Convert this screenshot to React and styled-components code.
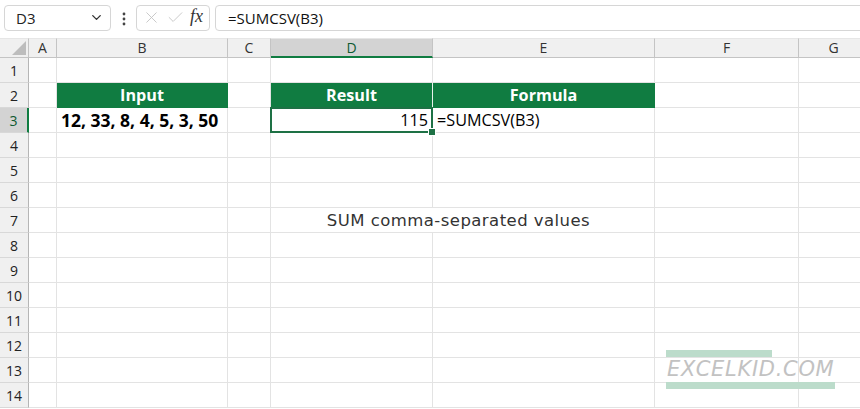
import styled, { createGlobalStyle } from "styled-components"
import { ChevronDown, X, Check } from "lucide-react"

const GREEN = "#107c41"
const GRID = "#e3e3e3"
const HEAD_LINE = "#c4c4c4"

const GlobalStyle = createGlobalStyle`
	html, body {
		margin: 0;
		padding: 0;
		background: #ffffff;
		overflow: hidden;
	}
	body {
		font-family: "Open Sans", "Liberation Sans", sans-serif;
		color: #000;
	}
`

const columns = [
	{ name: "A", width: 28 },
	{ name: "B", width: 171 },
	{ name: "C", width: 43 },
	{ name: "D", width: 162 },
	{ name: "E", width: 222 },
	{ name: "F", width: 144 },
	{ name: "G", width: 70 },
]

const rows = Array.from({ length: 14 }, (_, i) => i + 1)

// cell content keyed by "col+row"
const cells = {
	B2: { text: "Input", head: true },
	D2: { text: "Result", head: true, split: true },
	E2: { text: "Formula", head: true },
	B3: { text: "12, 33, 8, 4, 5, 3, 50", bold: true },
	D3: { text: "115", align: "right", selected: true },
	E3: { text: "=SUMCSV(B3)" },
}

const App = () => {
	return (
		<Page>
			<GlobalStyle />
			<FormulaBar>
				<NameBox>
					<span>D3</span>
					<ChevronDown size={15} strokeWidth={2.2} color="#333" />
				</NameBox>
				<Dots>
					<svg width="4" height="14" viewBox="0 0 4 14">
						<circle cx="2" cy="2" r="1.4" fill="#444" />
						<circle cx="2" cy="7" r="1.4" fill="#444" />
						<circle cx="2" cy="12" r="1.4" fill="#444" />
					</svg>
				</Dots>
				<ActionBox>
					<X size={19} strokeWidth={1.1} color="#c2c2c2" />
					<Check size={19} strokeWidth={1.1} color="#c2c2c2" />
					<Fx>fx</Fx>
				</ActionBox>
				<FormulaInput>=SUMCSV(B3)</FormulaInput>
			</FormulaBar>

			<Sheet>
				<Corner>
					<svg width="14" height="14" viewBox="0 0 14 14">
						<polygon points="14,0 14,14 0,14" fill="#bdbdbd" />
					</svg>
				</Corner>
				{columns.map((c) => (
					<ColHead key={c.name} $active={c.name === "D"}>
						{c.name}
					</ColHead>
				))}

				{rows.map((r) => (
					<Row key={r} r={r} />
				))}

				<Watermark>
					<WaterBar $w={106} />
					<WaterText>EXCELKID.COM</WaterText>
					<WaterBar $w={169} />
				</Watermark>
			</Sheet>
		</Page>
	)
}

const Row = ({ r }) => {
	const out = [
		<RowHead key="h" $active={r === 3}>
			{r}
		</RowHead>,
	]
	for (let i = 0; i < columns.length; i++) {
		const c = columns[i]
		if (r === 7 && c.name === "D") {
			out.push(
				<Cell key={c.name} $span={2}>
					<Note>SUM comma-separated values</Note>
				</Cell>
			)
			i++
			continue
		}
		const data = cells[c.name + r]
		if (!data) {
			out.push(<Cell key={c.name} />)
			continue
		}
		out.push(
			<Cell
				key={c.name}
				$head={data.head}
				$split={data.split}
				$bold={data.bold}
				$align={data.align}
				$selected={data.selected}
			>
				{data.text}
			</Cell>
		)
	}
	return out
}

const Page = styled.div`
	width: 860px;
	height: 409px;
	overflow: hidden;
	background: #ffffff;
`

const FormulaBar = styled.div`
	display: flex;
	align-items: center;
	height: 38px;
	padding: 0 0 3px 4px;
	box-sizing: border-box;
`

const Box = styled.div`
	height: 26px;
	box-sizing: border-box;
	border: 1px solid #d6d6d6;
	border-radius: 4px;
	background: #fff;
	display: flex;
	align-items: center;
`

const NameBox = styled(Box)`
	width: 107px;
	padding: 0 6px 0 11px;
	justify-content: space-between;
	font-size: 15px;
	color: #222;
`

const Dots = styled.div`
	width: 25px;
	display: flex;
	justify-content: center;
	padding-top: 2px;
`

const ActionBox = styled(Box)`
	width: 74px;
	padding: 0 4px 0 5px;
	justify-content: space-between;
`

const Fx = styled.span`
	font-family: "Liberation Serif", "DejaVu Serif", serif;
	font-style: italic;
	font-size: 18px;
	color: #333;
	margin-top: -3px;
	margin-right: 2px;
`

const FormulaInput = styled(Box)`
	flex: 1;
	margin-left: 5px;
	margin-right: -6px;
	padding-left: 12px;
	font-size: 15px;
	color: #111;
`

const Sheet = styled.div`
	position: relative;
	display: grid;
	grid-template-columns: 29px ${columns.map((c) => c.width + "px").join(" ")};
	grid-template-rows: 20px repeat(14, 25px);
`

const Corner = styled.div`
	background: #f0f0f0;
	border-right: 1px solid ${HEAD_LINE};
	border-bottom: 1px solid ${HEAD_LINE};
	border-top: 1px solid #e6e6e6;
	box-sizing: border-box;
	display: flex;
	align-items: flex-end;
	justify-content: flex-end;
	padding: 0 2px 2px 0;
`

const ColHead = styled.div`
	box-sizing: border-box;
	background: ${(p) => (p.$active ? "#d3d3d3" : "#f0f0f0")};
	border-top: 1px solid #e6e6e6;
	border-right: 1px solid ${HEAD_LINE};
	border-bottom: ${(p) => (p.$active ? `2px solid ${GREEN}` : `1px solid ${HEAD_LINE}`)};
	color: ${(p) => (p.$active ? "#0f5a31" : "#333")};
	font-size: 14px;
	display: flex;
	align-items: center;
	justify-content: center;
	line-height: 1;
	padding-top: ${(p) => (p.$active ? "1px" : "0")};
`

const RowHead = styled.div`
	box-sizing: border-box;
	background: ${(p) => (p.$active ? "#d3d3d3" : "#f0f0f0")};
	border-right: ${(p) => (p.$active ? `2px solid ${GREEN}` : `1px solid #b5b5b5`)};
	border-bottom: 1px solid #d8d8d8;
	color: ${(p) => (p.$active ? "#0f5a31" : "#222")};
	font-size: 14px;
	display: flex;
	align-items: center;
	justify-content: center;
`

const Cell = styled.div`
	position: relative;
	box-sizing: border-box;
	grid-column: span ${(p) => p.$span || 1};
	border-right: 1px solid ${(p) => (p.$split ? "#e8f2ec" : p.$head ? GREEN : GRID)};
	border-bottom: 1px solid ${(p) => (p.$head ? GREEN : GRID)};
	background: ${(p) => (p.$head ? GREEN : "transparent")};
	color: ${(p) => (p.$head ? "#fff" : "#000")};
	font-size: ${(p) => (p.$bold ? "17.5px" : "16.2px")};
	font-weight: ${(p) => (p.$head || p.$bold ? 700 : 400)};
	display: flex;
	align-items: center;
	justify-content: ${(p) =>
		p.$head || p.$span ? "center" : p.$align === "right" ? "flex-end" : "flex-start"};
	padding: 0 4px;
	white-space: nowrap;
	z-index: ${(p) => (p.$selected ? 2 : "auto")};
	${(p) =>
		p.$selected &&
		`
		&::after {
			content: "";
			position: absolute;
			left: -1px;
			top: -1px;
			right: -1px;
			bottom: -1px;
			border: 2px solid #1e7145;
		}
		&::before {
			content: "";
			position: absolute;
			right: -4px;
			bottom: -4px;
			width: 6px;
			height: 6px;
			background: #1e7145;
			border: 1px solid #fff;
			z-index: 3;
		}
	`}
`

const Note = styled.span`
	font-family: "DejaVu Sans", sans-serif;
	font-size: 16.5px;
	color: #333;
	margin-left: -8px;
	letter-spacing: 0.45px;
`

const Watermark = styled.div`
	position: absolute;
	left: 666px;
	top: 312px;
	display: flex;
	flex-direction: column;
	align-items: flex-start;
`

const WaterBar = styled.div`
	width: ${(p) => p.$w}px;
	height: 7px;
	background: #bcdccb;
`

const WaterText = styled.div`
	font-family: "DejaVu Sans", sans-serif;
	font-style: italic;
	font-size: 21px;
	line-height: 25px;
	color: #c2c2c2;
	letter-spacing: 0.7px;
	margin-left: 1px;
`

export default App
